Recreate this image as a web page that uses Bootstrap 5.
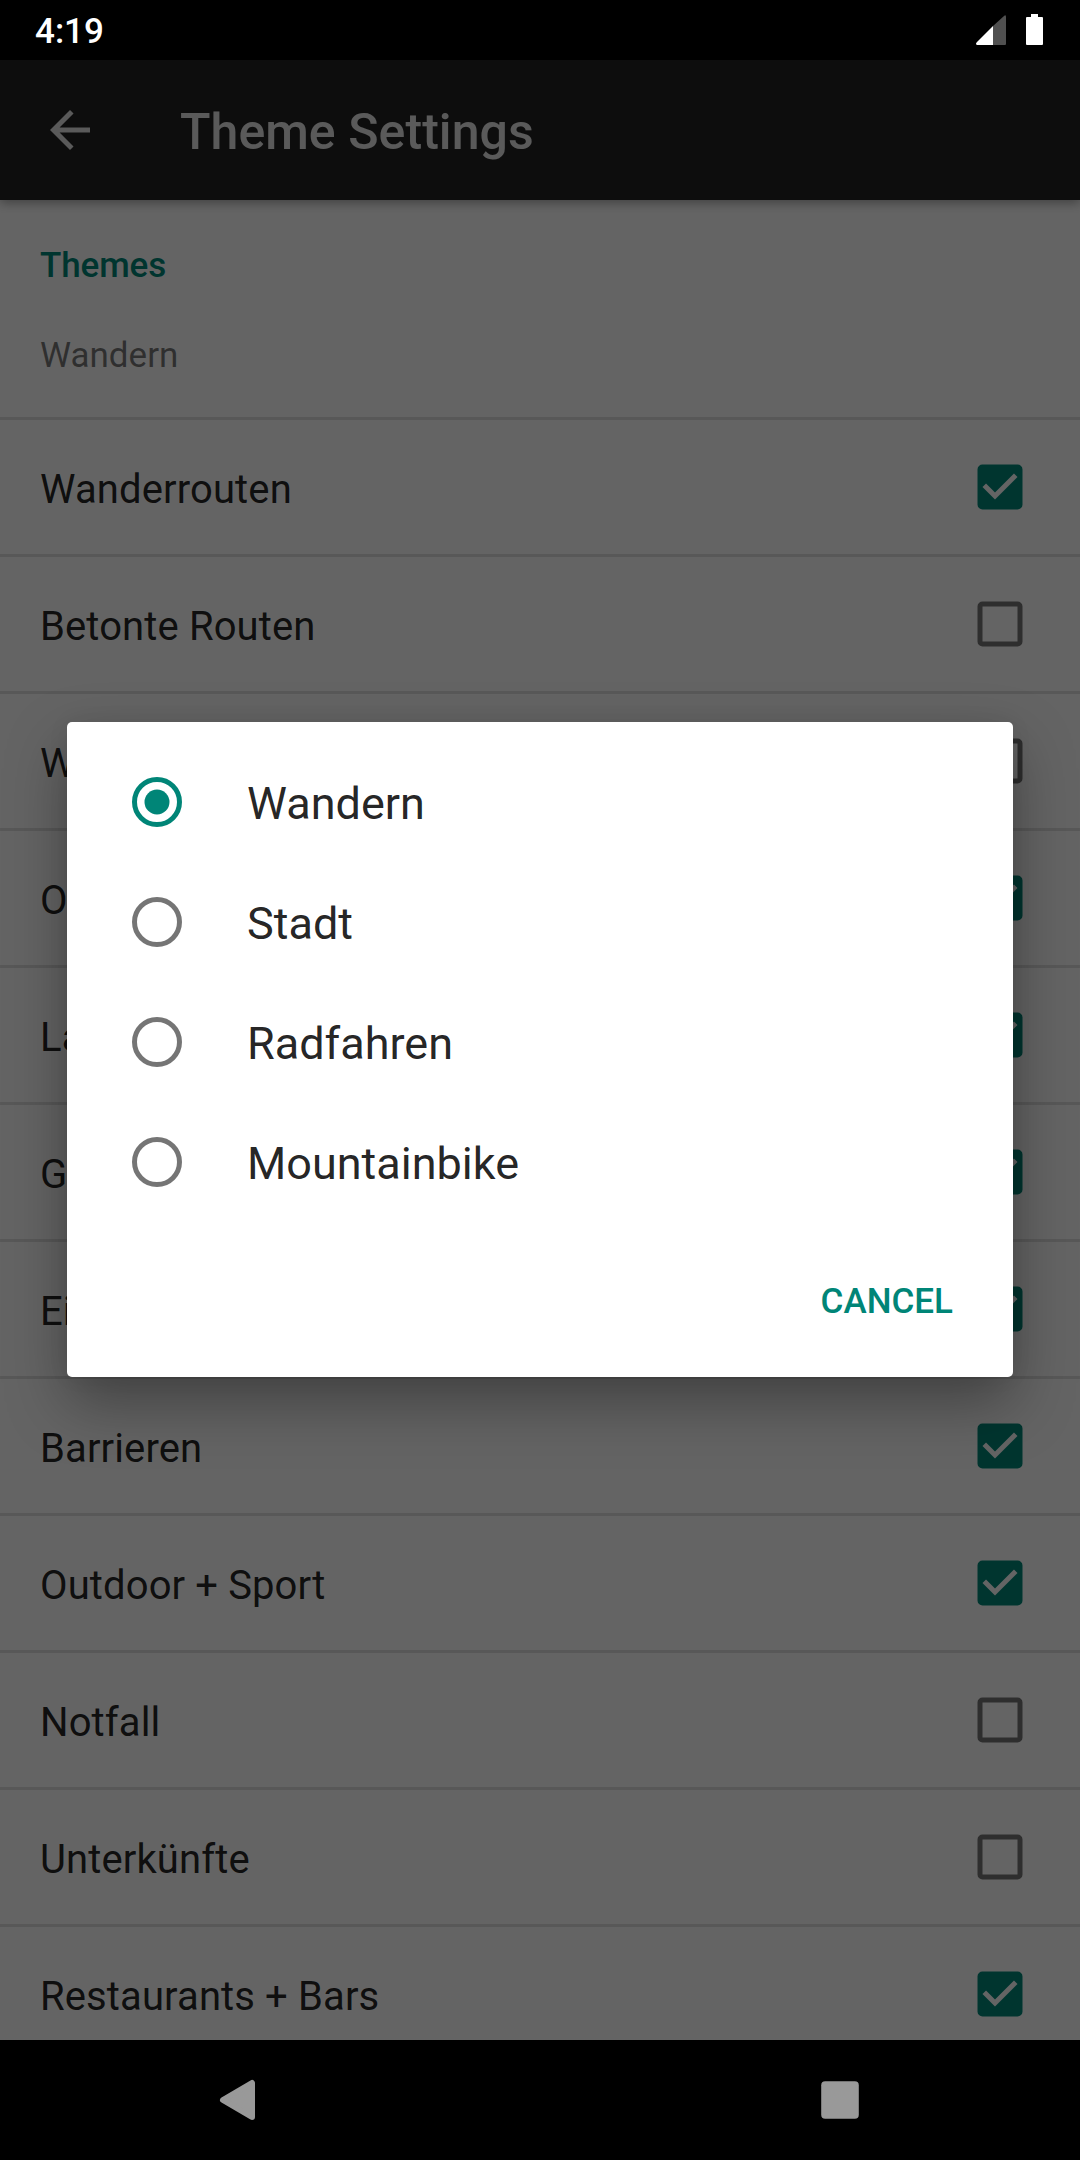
<!DOCTYPE html>
<html lang="de">
<head>
<meta charset="utf-8">
<title>Theme Settings</title>
<link href="https://cdn.jsdelivr.net/npm/bootstrap@5.3.0/dist/css/bootstrap.min.css" rel="stylesheet">
<style>
  body { font-family: Roboto, sans-serif; background: #000; color: rgba(0,0,0,.87); }
  .screen { width: 1080px; height: 2160px; overflow: hidden; }
  .medium { font-weight: 500; }
  .statusbar { height: 60px; padding: 0 35px; font-size: 35px; line-height: 1; color: #fff; }
  .clock { padding-top: 2px; }
  .app { background: #fafafa; min-height: 0; }
  .appbar { height: 140px; padding: 0 40px; background: #212121; color: rgba(255,255,255,.87); box-shadow: 0 3px 10px rgba(0,0,0,.35); z-index: 1; }
  .appbar h1 { font-size: 50px; line-height: 58px; padding-top: 4px; margin-left: 80px; letter-spacing: .07px; }
  .theme-head { height: 220px; padding: 45px 40px 0; font-size: 35px; line-height: 42px; border-bottom: 3px solid #dcdcdc; }
  .teal { color: #008577; letter-spacing: -.1px; }
  .summary { margin-top: 48px; color: rgba(0,0,0,.54); }
  .pref { height: 137px; padding: 0 50px 0 40px; font-size: 40px; line-height: 46px; letter-spacing: .12px; border-bottom: 3px solid #dcdcdc; }
  .pref span { padding-top: 6px; }
  .pref:last-child { height: 134px; border-bottom: 0; }
  .ico { width: 60px; height: 60px; display: block; }
  .scrim { padding-top: 662px; background: rgba(0,0,0,.6); z-index: 2; }
  .dialog { width: 946px; height: 655px; margin-left: 67px; padding: 20px 0; background: #fff; border-radius: 5px; box-shadow: 0 26px 60px rgba(0,0,0,.34), 0 0 22px rgba(0,0,0,.06); }
  .choice { height: 120px; padding-left: 60px; font-size: 45px; line-height: 52px; }
  .choice span { padding-top: 4px; margin-left: 60px; }
  .choice .ico { color: rgba(0,0,0,.54); }
  .choice.on .ico { color: #008577; }
  .cancel { font-size: 35px; line-height: 42px; color: #008577; padding: 59px 60px 0 0; }
  .navkeys { height: 120px; padding: 0 210px; }
</style>
</head>
<body>
<svg class="d-none">
  <symbol id="on" viewBox="0 0 24 24"><path fill="#008577" fill-rule="evenodd" d="M19 3H5a2 2 0 0 0-2 2v14a2 2 0 0 0 2 2h14a2 2 0 0 0 2-2V5a2 2 0 0 0-2-2zM10 17l-5-5 1.41-1.41L10 14.17l7.59-7.59L19 8z"/></symbol>
  <symbol id="off" viewBox="0 0 24 24"><path fill="#000" fill-opacity=".54" d="M19 5v14H5V5h14m0-2H5a2 2 0 0 0-2 2v14a2 2 0 0 0 2 2h14a2 2 0 0 0 2-2V5a2 2 0 0 0-2-2z"/></symbol>
  <symbol id="radio" viewBox="0 0 24 24"><circle cx="12" cy="12" r="9" fill="none" stroke="currentColor" stroke-width="2"/></symbol>
</svg>
<div class="screen d-flex flex-column position-relative">
  <header class="statusbar d-flex align-items-center justify-content-between flex-shrink-0">
    <span class="clock medium">4:19</span>
    <svg width="72" height="60" viewBox="973 0 72 60">
      <path fill="#505050" d="M1006 17q0-3-2 -1L993 26v19h12q1 0 1-1z"/>
      <path fill="#fff" d="M993 26v19h-16q-2-1 0-3z"/>
      <path fill="#fff" d="M1031 17v-3h7v3h4q1 0 1 1v26q0 1-1 1h-15q-1 0-1-1V18q0-1 1-1z"/>
    </svg>
  </header>
  <main class="app flex-grow-1 d-flex flex-column position-relative overflow-hidden">
    <div class="appbar d-flex align-items-center flex-shrink-0">
      <svg class="ico" viewBox="0 0 24 24"><path fill="currentColor" d="M20 11H7.83l5.59-5.59L12 4l-8 8 8 8 1.41-1.41L7.83 13H20z"/></svg>
      <h1 class="mb-0 medium">Theme Settings</h1>
    </div>
    <section class="theme-head flex-shrink-0">
      <div class="teal medium">Themes</div>
      <div class="summary">Wandern</div>
    </section>
    <div class="d-flex flex-column">
      <div class="pref d-flex align-items-center justify-content-between flex-shrink-0"><span>Wanderrouten</span><svg class="ico"><use href="#on"/></svg></div>
      <div class="pref d-flex align-items-center justify-content-between flex-shrink-0"><span>Betonte Routen</span><svg class="ico"><use href="#off"/></svg></div>
      <div class="pref d-flex align-items-center justify-content-between flex-shrink-0"><span>W</span><svg class="ico"><use href="#off"/></svg></div>
      <div class="pref d-flex align-items-center justify-content-between flex-shrink-0"><span>O</span><svg class="ico"><use href="#on"/></svg></div>
      <div class="pref d-flex align-items-center justify-content-between flex-shrink-0"><span>La</span><svg class="ico"><use href="#on"/></svg></div>
      <div class="pref d-flex align-items-center justify-content-between flex-shrink-0"><span>G</span><svg class="ico"><use href="#on"/></svg></div>
      <div class="pref d-flex align-items-center justify-content-between flex-shrink-0"><span>Ei</span><svg class="ico"><use href="#on"/></svg></div>
      <div class="pref d-flex align-items-center justify-content-between flex-shrink-0"><span>Barrieren</span><svg class="ico"><use href="#on"/></svg></div>
      <div class="pref d-flex align-items-center justify-content-between flex-shrink-0"><span>Outdoor + Sport</span><svg class="ico"><use href="#on"/></svg></div>
      <div class="pref d-flex align-items-center justify-content-between flex-shrink-0"><span>Notfall</span><svg class="ico"><use href="#off"/></svg></div>
      <div class="pref d-flex align-items-center justify-content-between flex-shrink-0"><span>Unterkünfte</span><svg class="ico"><use href="#off"/></svg></div>
      <div class="pref d-flex align-items-center justify-content-between flex-shrink-0"><span>Restaurants + Bars</span><svg class="ico"><use href="#on"/></svg></div>
    </div>
    <div class="scrim position-absolute top-0 start-0 w-100 h-100">
      <div class="dialog" role="dialog">
        <div class="choice on d-flex align-items-center"><svg class="ico" viewBox="0 0 24 24"><use href="#radio"/><circle cx="12" cy="12" r="5" fill="currentColor"/></svg><span>Wandern</span></div>
        <div class="choice d-flex align-items-center"><svg class="ico"><use href="#radio"/></svg><span>Stadt</span></div>
        <div class="choice d-flex align-items-center"><svg class="ico"><use href="#radio"/></svg><span>Radfahren</span></div>
        <div class="choice d-flex align-items-center"><svg class="ico"><use href="#radio"/></svg><span>Mountainbike</span></div>
        <div class="cancel medium text-end">CANCEL</div>
      </div>
    </div>
  </main>
  <footer class="navkeys d-flex align-items-center justify-content-between flex-shrink-0 bg-black">
    <svg class="ico" viewBox="0 0 60 60"><path fill="#999" stroke="#999" stroke-width="6" stroke-linejoin="round" d="M13 30L42 13v34z"/></svg>
    <svg class="ico" viewBox="0 0 60 60"><rect x="11.2" y="11.2" width="37.6" height="37.6" rx="4" fill="#999"/></svg>
  </footer>
</div>
<script src="https://cdn.jsdelivr.net/npm/bootstrap@5.3.0/dist/js/bootstrap.bundle.min.js"></script>
</body>
</html>
